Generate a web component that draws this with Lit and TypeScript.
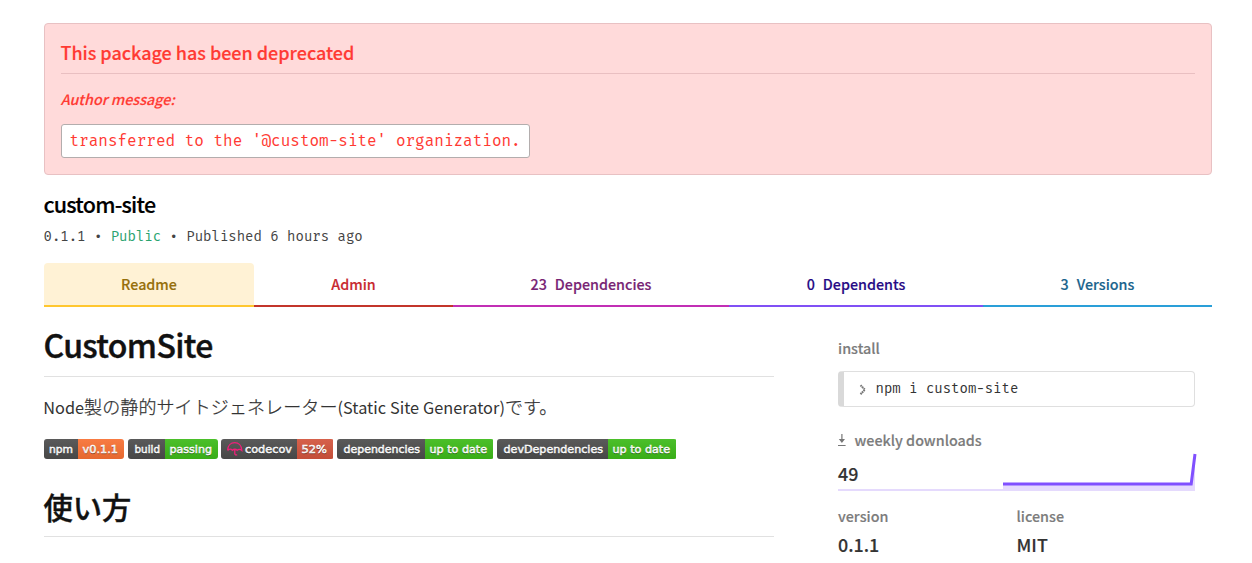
import { LitElement, html, css, svg } from "lit";
import { customElement, property } from "lit/decorators.js";

@customElement("status-badge")
class StatusBadge extends LitElement {
  @property() label = "";
  @property() value = "";
  @property() tone = "green";
  @property({ type: Boolean }) umbrella = false;
  @property({ type: Number }) left = 40;
  @property({ type: Number }) right = 40;

  static styles = css`
    :host { display: block; }
    .badge {
      display: flex; height: 20px; border-radius: 3px; overflow: hidden;
      text-shadow: 0 1px 0 rgba(1, 1, 1, 0.3);
    }
    .part { display: flex; align-items: center; justify-content: center; white-space: nowrap; background-image: linear-gradient(rgba(187,187,187,.1), rgba(0,0,0,.1)); }
    .key { background-color: #4f4f4f; }
    .green { background-color: #3fc01a; }
    .orange { background-color: #ff7435; }
    .red { background-color: #d9573f; }
    text { font: 11px Verdana, "DejaVu Sans", sans-serif; fill: #fff; stroke: #fff; stroke-width: 0.5; }
    svg { display: block; flex: none; }
  `;

  private segment(t: string, w: number, pad: number, start: number, icon: boolean) {
    return html`<svg width=${w} height="20">
      <text x=${start} y="14" textLength=${w - start - pad} lengthAdjust="spacingAndGlyphs">${t}</text>
      ${icon
        ? svg`<path d="M6.6 11.4 C6.8 6.6 9.8 3.7 13.7 3.7 C17.6 3.7 20.6 6.6 20.8 11.4 C19.3 10 17.4 10 16.2 11.3 C14.8 9.9 12.8 9.9 11.4 11.3 C10.2 10 8.2 10 6.6 11.4 M13.8 10.5 V14.6 Q14 16.4 16.2 15.8" fill="none" stroke="#f01f7a" stroke-width="1.3"/>`
        : ""}
    </svg>`;
  }

  render() {
    return html`<div class="badge">
      <div class="part key">${this.segment(this.label, this.left, 5, this.umbrella ? 24 : this.left > 80 || this.label === "build" ? 6.5 : 5, this.umbrella)}</div>
      <div class="part ${this.tone}">${this.segment(this.value, this.right, 6, 4.5, false)}</div>
    </div>`;
  }
}

@customElement("app-root")
class AppRoot extends LitElement {
  static styles = css`
    :host {
      display: block; box-sizing: border-box; width: 1252px; height: 563px; overflow: hidden;
      padding: 23px 40px 0 44px; background: #fff; color: #333;
      font-family: "Source Sans Pro", "Noto Sans CJK JP", sans-serif;
    }
    * { box-sizing: border-box; }
    h1, h2, h3, h4, p { margin: 0; font-weight: 500; white-space: nowrap; }
    h1, h2, h3, .tab span, .value { -webkit-text-stroke: 0.15px currentColor; }
    .mono { font-family: "Fira Mono", "Liberation Mono", monospace; }
    .alert { height: 152px; padding: 16px; border: 1px solid #e8c1c3; border-radius: 4px; background: #ffdada; color: #ff3a33; }
    .alert-title { height: 34px; border-bottom: 1px solid #e9bfc1; font-size: 18px; line-height: 24px; letter-spacing: -0.02px; text-indent: -0.6px; }
    .author { margin-top: 15px; font-size: 14.3px; line-height: 20px; font-style: italic; text-indent: -0.3px; }
    .message {
      width: 469px; height: 34px; margin-top: 15px; padding: 0 7.5px; border: 1px solid #b3adad;
      border-radius: 3px; background: #fff; font-size: 16px; line-height: 32px; white-space: nowrap;
    }
    .name { margin-top: 15px; color: #000; font-size: 21.5px; line-height: 28px; letter-spacing: -0.78px; text-indent: -0.6px; }
    .meta { margin-top: 9px; font-size: 14px; line-height: 20px; color: #444; white-space: pre; text-indent: -0.5px; }
    .public { color: #29a36f; }
    .tabs { display: grid; grid-template-columns: 210px 199px 276px 254px 229px; height: 44px; margin-top: 16px; }
    .tab { display: flex; justify-content: center; gap: 8px; border-bottom: 2px solid; font-size: 14.3px; line-height: 42px; font-weight: 500; }
    .readme { background: #fff2d5; border-color: #ffc72f; border-radius: 4px 4px 0 0; }
    .admin { border-color: #c3352b; }
    .deps { border-color: #c22fb5; }
    .dependents { border-color: #8050f5; }
    .versions { border-color: #2a9fd8; }
    .readme span { color: #966f0a; } .admin span { color: #c8292f; } .deps span { color: #782474; }
    .dependents span { color: #260a85; } .versions span { color: #1a648d; }
    .columns { display: grid; grid-template-columns: 730px 357px; gap: 64px; }
    .title { height: 53px; margin-top: 17px; border-bottom: 1px solid #e1e1e1; color: #111; font-size: 32px; line-height: 40px; letter-spacing: -0.65px; text-indent: -0.5px; -webkit-text-stroke-width: 0.4px; }
    .intro { margin-top: 16px; height: 28px; font-size: 16.3px; line-height: 28px; font-weight: 400; text-indent: -0.7px; }
    .latin { letter-spacing: 0.05px; }
    .ja { font-size: 18px; font-weight: 300; line-height: 1; letter-spacing: 0.1px; -webkit-text-stroke: 0.25px currentColor; }
    .badges { display: grid; grid-template-columns: 80px 90px 112px 156px 179px; column-gap: 4px; margin-top: 18px; }
    .badges .shift { margin-left: -1px; }
    .usage { height: 50px; margin-top: 28px; border-bottom: 1px solid #e1e1e1; color: #111; font-size: 29.3px; line-height: 39px; text-indent: -0.5px; -webkit-text-stroke-width: 0.4px; }
    aside { padding-top: 31px; }
    .label { font-size: 14.35px; line-height: 20px; color: #7c7c7c; }
    .install { display: flex; align-items: center; gap: 7.5px; height: 36px; margin-top: 13px; padding-left: 15px; border: 1px solid #dfdfdf; border-left: 6px solid #d9d9d9; border-radius: 4px; font-size: 14px; line-height: 34px; }
    .downloads { display: flex; align-items: center; gap: 8.5px; margin-top: 23px; }
    .stats { display: flex; height: 41px; }
    .count { flex: none; width: 165px; padding-top: 11px; border-bottom: 2px solid #e5dafd; }
    .value { font-size: 17.9px; line-height: 24px; color: #333; font-weight: 500; }
    .chart { display: block; flex: none; overflow: visible; }
    .facts { display: grid; grid-template-columns: 178.5px 1fr; margin-top: 15px; }
    .facts .value { margin-top: 6px; }
  `;

  render() {
    return html`
      <section class="alert">
        <h2 class="alert-title">This package has been deprecated</h2>
        <h3 class="author">Author message:</h3>
        <div class="message mono">transferred to the '@custom-site' organization.</div>
      </section>
      <h2 class="name">custom-site</h2>
      <div class="meta mono">0.1.1 • <span class="public">Public</span> • Published 6 hours ago</div>
      <nav class="tabs">
        <div class="tab readme"><span>Readme</span></div>
        <div class="tab admin"><span>Admin</span></div>
        <div class="tab deps"><span>23</span><span>Dependencies</span></div>
        <div class="tab dependents"><span>0</span><span>Dependents</span></div>
        <div class="tab versions"><span>3</span><span>Versions</span></div>
      </nav>
      <div class="columns">
        <main>
          <h1 class="title">CustomSite</h1>
          <p class="intro">Node<span class="ja">製の静的サイトジェネレーター</span><span class="latin">(Static Site Generator)</span><span class="ja">です。</span></p>
          <div class="badges">
            <status-badge label="npm" value="v0.1.1" tone="orange" left="34" right="46"></status-badge>
            <status-badge label="build" value="passing" left="37" right="53"></status-badge>
            <status-badge class="shift" label="codecov" value="52%" tone="red" umbrella left="76" right="36"></status-badge>
            <status-badge class="shift" label="dependencies" value="up to date" left="88" right="68"></status-badge>
            <status-badge class="shift" label="devDependencies" value="up to date" left="111" right="68"></status-badge>
          </div>
          <h2 class="usage">使い方</h2>
        </main>
        <aside>
          <h3 class="label">install</h3>
          <div class="install mono">
            <svg width="9" height="12" viewBox="0 0 9 12"><path d="M1.5 2.2 L5.9 6.7 L1.5 11.2" fill="none" stroke="#777" stroke-width="2" stroke-dasharray="1.7 .5"/></svg>
            <span>npm i custom-site</span>
          </div>
          <h3 class="label downloads">
            <svg width="8" height="12" viewBox="0 0 8 12"><path d="M0 11 H7.6 V12 H0 Z M3.3 0 H4.5 V5 H7 L3.9 9 L.8 5 H3.3 Z" fill="#777"/></svg>
            <span>weekly downloads</span>
          </h3>
          <div class="stats">
            <div class="count value">49</div>
            <svg class="chart" width="194" height="41" viewBox="0 0 194 41">
              <path d="M0 34 H188 L192 4 V41 H0 Z" fill="#e5dafd"/>
              <path d="M0 34 H188.2 L192 4" fill="none" stroke="#8050ff" stroke-width="3"/>
            </svg>
          </div>
          <div class="facts">
            <div><h3 class="label">version</h3><div class="value">0.1.1</div></div>
            <div><h3 class="label">license</h3><div class="value">MIT</div></div>
          </div>
        </aside>
      </div>
    `;
  }
}
